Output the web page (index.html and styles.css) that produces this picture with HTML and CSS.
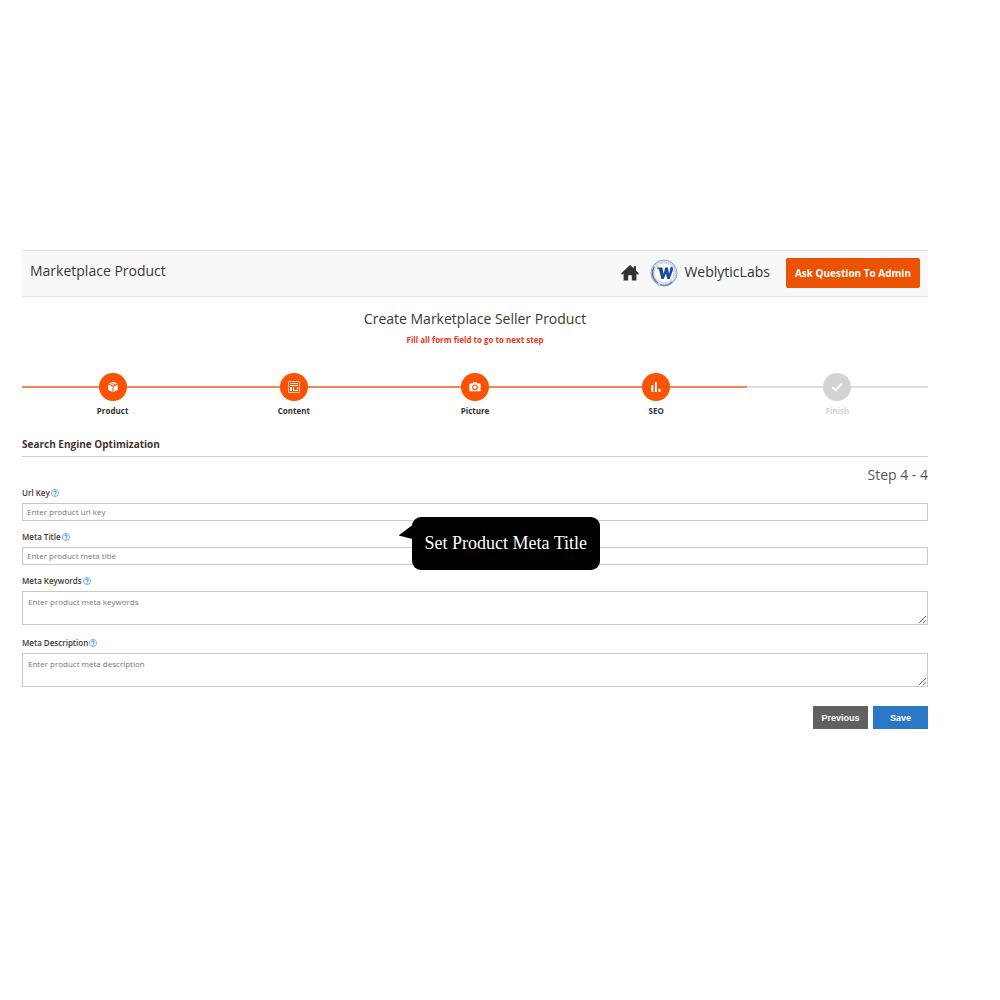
FILE: index.html
```
<!DOCTYPE html>
<html lang="en">
<head>
  <meta charset="UTF-8">
  <meta name="viewport" content="width=device-width, initial-scale=1.0">
  <title>Marketplace Product</title>
  <link rel="stylesheet" href="styles.css">
</head>
<body>

<svg class="sprite" width="0" height="0" aria-hidden="true">
  <symbol id="icon-help" viewBox="0 0 16 16">
    <circle cx="8" cy="8" r="7.2" fill="#f2f9ff" stroke="#5aa2d8" stroke-width="1.5"/>
    <path d="M5.4 6.2C5.4 3.2 10.6 3.2 10.6 6.1C10.6 8 8 7.8 8 9.8" fill="none" stroke="#1f78bd" stroke-width="1.7"/>
    <circle cx="8" cy="12.2" r="1.1" fill="#1f78bd"/>
  </symbol>
</svg>

<header class="topbar">
  <h1 class="topbar-title">Marketplace Product</h1>
  <div class="topbar-right">
    <a href="#" class="home-link" aria-label="Home">
      <svg width="18" height="16" viewBox="0 0 18 16">
        <path d="M9 0L0 8.4L1.2 9.7L2.6 8.5V15.6H7.2V10.3H10.8V15.6H15.4V8.5L16.8 9.7L18 8.4L15 5.6V1.2H12.6V3.3Z" fill="#333"/>
      </svg>
    </a>
    <a href="#" class="seller">
      <svg width="28" height="28" viewBox="0 0 28 28">
        <circle cx="14" cy="14" r="13" fill="#eef2f8" stroke="#8fa2c3" stroke-width="1"/>
        <circle cx="14" cy="14" r="11.5" fill="none" stroke="#b3c1da" stroke-width="1.4" stroke-dasharray="1.2 .8"/>
        <circle cx="14" cy="14" r="10" fill="#fff" stroke="#b5c4de" stroke-width=".7"/>
        <path d="M4.2 8A11.5 11.5 0 0 0 8 23.8" fill="none" stroke="#5274ae" stroke-width="1.4"/>
        <path d="M10 25.5A12 12 0 0 0 22 23" fill="none" stroke="#6683b5" stroke-width="1.2"/>
        <path d="M7.2 8.6H12.4L13.6 15L15.2 8.6H18L19 15L20.2 10.4C20 8.9 20.6 8 21.7 8.1C23.3 8.3 23.3 10.3 22.6 12L19.6 20H17.2L15.9 14.4L13.8 20H11.4L8.9 10.2L7.2 9.8Z" fill="#174c9c"/>
      </svg>
      <span class="seller-name">WeblyticLabs</span>
    </a>
    <button type="button" class="btn-ask">Ask Question To Admin</button>
  </div>
</header>

<main>
  <h2 class="page-title">Create Marketplace Seller Product</h2>
  <p class="page-note">Fill all form field to go to next step</p>

  <ol class="steps">
    <li class="step">
      <span class="step-icon">
        <svg width="12" height="12" viewBox="0 0 12 12">
          <path d="M6 .8L10.3 2.6L6 4.5L1.7 2.6ZM1.2 3.5L5.5 5.4V11L1.2 8.9ZM10.8 3.5L6.5 5.4V11L10.8 8.9Z" fill="#fff"/>
          <path d="M3.6 1.7L8.1 3.7V5.2" fill="none" stroke="#fa5304" stroke-width=".7"/>
        </svg>
      </span>
      <span class="step-label">Product</span>
    </li>
    <li class="step">
      <span class="step-icon">
        <svg width="12" height="12" viewBox="0 0 12 12">
          <path d="M.5 .5H11.5V11.5H.5Z" fill="none" stroke="#ffc4a8" stroke-width="1"/>
          <path d="M2 2H10V3H2Z" fill="#ffd6c2"/>
          <path d="M2 4H10V5H2ZM2 6H4V10H2ZM5 6H6V10H5ZM9 6H10V10H9ZM6 9H9V10H6Z" fill="#fff"/>
        </svg>
      </span>
      <span class="step-label">Content</span>
    </li>
    <li class="step">
      <span class="step-icon">
        <svg width="12" height="12" viewBox="0 0 12 12">
          <path d="M1 2.5H3.3L4.2 1.3H7.8L8.7 2.5H11Q11.6 2.5 11.6 3.1V9.7Q11.6 10.3 11 10.3H1Q.4 10.3 .4 9.7V3.1Q.4 2.5 1 2.5Z" fill="#fff"/>
          <circle cx="6" cy="6.3" r="2.3" fill="#fff" stroke="#fa5304" stroke-width="1.1"/>
        </svg>
      </span>
      <span class="step-label">Picture</span>
    </li>
    <li class="step">
      <span class="step-icon">
        <svg width="12" height="12" viewBox="0 0 12 12">
          <path d="M1.3 4.2H3.3V11H1.3ZM4.9 1H6.9V11H4.9ZM8.5 7.7H10.7V11H8.5Z" fill="#fff"/>
        </svg>
      </span>
      <span class="step-label">SEO</span>
    </li>
    <li class="step step-pending">
      <span class="step-icon">
        <svg width="12" height="12" viewBox="0 0 12 12">
          <path d="M1.2 6.2L4.5 9.2L10.8 2.8" fill="none" stroke="#fff" stroke-width="2"/>
        </svg>
      </span>
      <span class="step-label">Finish</span>
    </li>
  </ol>

  <form>
    <h3 class="section-title">Search Engine Optimization</h3>
    <p class="step-count">Step 4 - 4</p>

    <div class="field">
      <label for="url-key">Url Key <svg class="help"><use href="#icon-help"/></svg></label>
      <input type="text" id="url-key" placeholder="Enter product url key">
    </div>

    <div class="field">
      <label for="meta-title">Meta Title <svg class="help"><use href="#icon-help"/></svg></label>
      <input type="text" id="meta-title" placeholder="Enter product meta title">
      <div class="tooltip" role="tooltip">Set Product Meta Title</div>
    </div>

    <div class="field">
      <label for="meta-keywords">Meta Keywords <svg class="help"><use href="#icon-help"/></svg></label>
      <textarea id="meta-keywords" placeholder="Enter product meta keywords"></textarea>
    </div>

    <div class="field">
      <label for="meta-description">Meta Description <svg class="help"><use href="#icon-help"/></svg></label>
      <textarea id="meta-description" placeholder="Enter product meta description"></textarea>
    </div>

    <div class="actions">
      <button type="button" class="btn btn-previous">Previous</button>
      <button type="submit" class="btn btn-save">Save</button>
    </div>
  </form>
</main>

</body>
</html>
```
FILE: styles.css
```
* {
  box-sizing: border-box;
}

body {
  margin: 0;
  padding: 250px 72px 40px 22px;
  background: #fff;
  color: #41362f;
  font-family: "Open Sans", "Noto Sans", sans-serif;
}

h1, h2, h3, p, ol {
  margin: 0;
  padding: 0;
}

.sprite {
  position: absolute;
}

/* header */
.topbar {
  display: flex;
  justify-content: space-between;
  align-items: center;
  height: 47px;
  padding: 0 8px;
  background: #f8f8f8;
  border-top: 1px solid #e3e3e3;
  border-bottom: 1px solid #e3e3e3;
}

.topbar-title,
.page-title {
  font-size: 14px;
  font-weight: 500;
  line-height: 20px;
}

.topbar-title {
  padding-bottom: 6px;
}

.topbar-right,
.seller {
  display: flex;
  align-items: center;
}

.topbar-right {
  padding-bottom: 1px;
}

.home-link {
  display: flex;
  margin-right: 11px;
}

.seller {
  gap: 6px;
  margin-right: 16px;
  color: #333;
  text-decoration: none;
}

.seller-name {
  font-size: 14px;
  font-weight: 500;
  line-height: 20px;
  padding-bottom: 2px;
}

.btn-ask {
  height: 30px;
  padding: 0 9px;
  background: #eb5202;
  border: none;
  border-radius: 2px;
  color: #fff;
  font-family: inherit;
  font-size: 10px;
  font-weight: 700;
  cursor: pointer;
}

/* heading */
.page-title {
  padding-top: 12px;
  text-align: center;
}

.page-note {
  padding-top: 4px;
  color: #f03420;
  font-size: 8px;
  font-weight: 700;
  line-height: 14px;
  text-align: center;
}

/* wizard steps */
.steps {
  display: flex;
  margin-top: 26px;
  list-style: none;
}

.step {
  flex: 1;
  display: flex;
  flex-direction: column;
  align-items: center;
  background: linear-gradient(#f4845a, #f4845a) 0 13px / 100% 2px no-repeat;
}

.step-icon {
  display: flex;
  align-items: center;
  justify-content: center;
  width: 28px;
  height: 28px;
  border-radius: 50%;
  background: #fa5304;
}

.step-label {
  margin-top: 4px;
  color: #333;
  font-size: 8px;
  font-weight: 700;
  line-height: 12px;
}

.step-pending {
  background-image: linear-gradient(#dedede, #dedede);
}

.step-pending .step-icon {
  background: #d3d3d3;
}

.step-pending .step-label {
  color: #d3d3d3;
}

/* form */
.section-title {
  margin-top: 20px;
  padding-bottom: 4px;
  border-bottom: 1px solid #cfcfcf;
  font-size: 10px;
  font-weight: 700;
  line-height: 15px;
}

.step-count {
  padding: 8px 0 2px;
  color: #555;
  font-size: 14px;
  line-height: 20px;
  text-align: right;
}

.field {
  position: relative;
  margin-bottom: 10px;
}

label {
  display: flex;
  align-items: center;
  gap: 1px;
  margin-bottom: 4px;
  font-size: 8px;
  font-weight: 600;
  line-height: 12px;
}

.help {
  width: 8px;
  height: 8px;
}

input,
textarea {
  display: block;
  width: 100%;
  margin: 0;
  background: #fff;
  border: 1px solid #c9c9c9;
  border-radius: 0;
  color: #333;
  font-family: inherit;
  font-size: 8px;
  line-height: 12px;
}

input {
  height: 18px;
  padding: 0 4px 1px;
}

textarea {
  height: 34px;
  margin-bottom: 12px;
  padding: 4px 5px;
  resize: vertical;
}

::placeholder {
  color: #757575;
}

.tooltip {
  position: absolute;
  z-index: 1;
  bottom: -5px;
  left: 43%;
  padding: 14px 13px;
  background: #000;
  border-radius: 9px;
  color: #fff;
  font-family: "Liberation Serif", serif;
  font-size: 18px;
  line-height: 25px;
  white-space: nowrap;
}

.tooltip::before {
  content: "";
  position: absolute;
  top: 8px;
  left: -13px;
  width: 14px;
  height: 14px;
  background: #000;
  clip-path: polygon(0 75%, 100% 0, 100% 100%);
}

/* buttons */
.actions {
  display: flex;
  justify-content: flex-end;
  gap: 5px;
  padding-top: 7px;
}

.btn {
  width: 55px;
  height: 23px;
  padding: 0;
  border: none;
  color: #fff;
  font-family: "Liberation Sans", Arial, sans-serif;
  font-size: 9px;
  font-weight: 700;
  cursor: pointer;
}

.btn-previous {
  background: #616161;
}

.btn-save {
  background: #2a78c5;
}
```
